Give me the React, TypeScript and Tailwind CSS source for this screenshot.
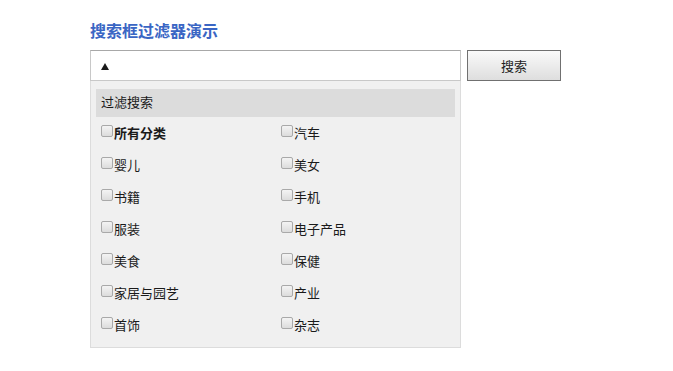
import React from 'react';

const categories: [string, string][] = [
  ['所有分类', '汽车'],
  ['婴儿', '美女'],
  ['书籍', '手机'],
  ['服装', '电子产品'],
  ['美食', '保健'],
  ['家居与园艺', '产业'],
  ['首饰', '杂志'],
];

const Item = ({ label, bold }: { label: string; bold?: boolean }) => (
  <label className="flex h-8 items-center pb-[1px]">
    <input
      type="checkbox"
      className="mb-[3px] h-3 w-3 shrink-0 appearance-none rounded-[2px] border border-[#a9a9a9] bg-gradient-to-b from-[#f4f4f4] to-[#dcdcdc]"
    />
    <span className={`ml-[1px] text-[13px] leading-none text-[#1a1a1a] ${bold ? 'font-bold' : ''}`}>{label}</span>
  </label>
);

export default function App() {
  return (
    <div
      className="min-h-[371px] bg-white pl-[90px] pt-[20px]"
      style={{ fontFamily: '"Noto Sans CJK SC", "Liberation Sans", sans-serif' }}
    >
      <h1 className="mb-[10px] h-5 text-[16px] leading-5 font-bold text-[#3a66c4]">搜索框过滤器演示</h1>

      <div className="flex">
        <div className="flex h-[31px] w-[371px] items-center border border-[#c8c8c8] border-t-[#a8a8a8] bg-white pl-[10px]">
          <svg width="8" height="7" viewBox="0 0 8 7" className="mt-[2px]">
            <path d="M4 0 L8 7 L0 7 Z" fill="#1a1a1a" />
          </svg>
        </div>
        <button className="ml-[6px] h-[31px] w-[94px] border border-[#707070] bg-gradient-to-b from-[#fafafa] to-[#dedede] text-[13px] text-[#222]">
          搜索
        </button>
      </div>

      <div className="w-[371px] border border-t-0 border-[#dcdcdc] bg-[#f0f0f0] px-[5px] pt-[8px] pb-[6px]">
        <div className="flex h-[28px] items-center bg-[#dcdcdc] pb-[2px] pl-[5px] text-[13px] text-[#1a1a1a]">过滤搜索</div>
        <div className="grid grid-cols-[180px_180px] pl-[5px]">
          {categories.map(([a, b], i) => (
            <React.Fragment key={a}>
              <Item label={a} bold={i === 0} />
              <Item label={b} />
            </React.Fragment>
          ))}
        </div>
      </div>
    </div>
  );
}
